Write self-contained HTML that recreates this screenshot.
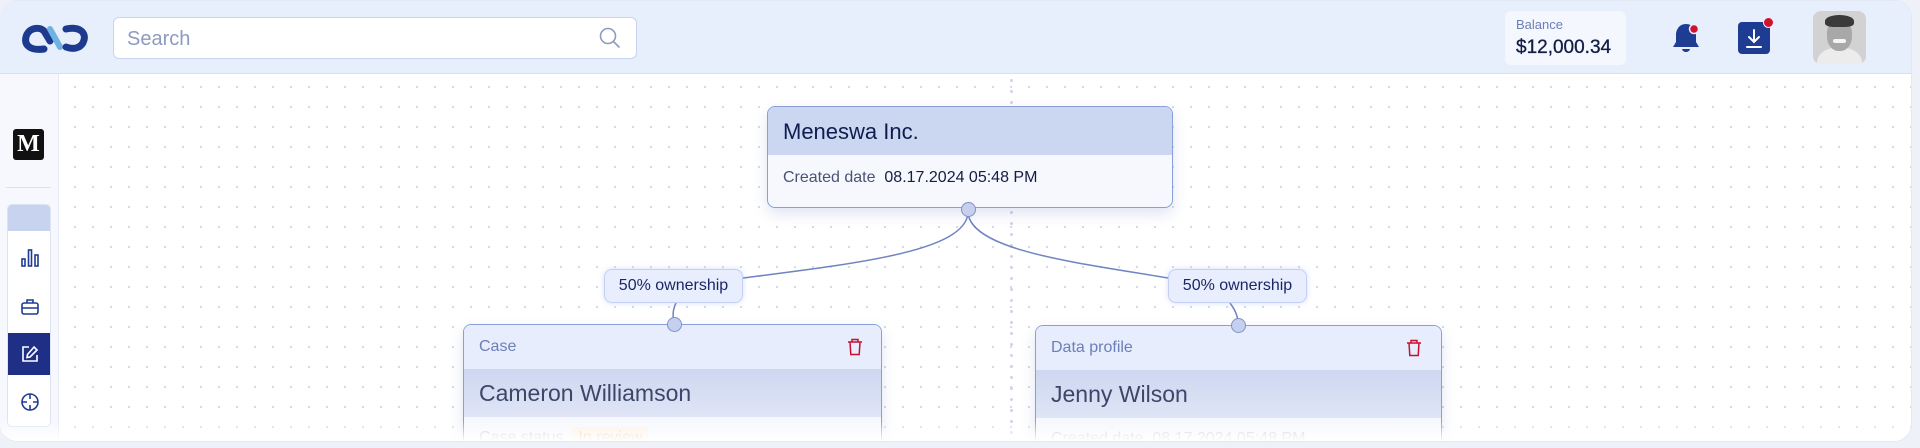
<!DOCTYPE html>
<html><head><meta charset="utf-8"><style>
*{box-sizing:border-box;margin:0;padding:0}
body{width:1920px;height:448px;background:#eef1f8;font-family:"Liberation Sans",sans-serif;overflow:hidden;position:relative}
.frame{position:absolute;left:0;top:0;width:1912px;height:442px;background:#fff;border-radius:18px;overflow:hidden;border:1px solid #e3e8f5;border-left:none}
.header{position:absolute;left:0;top:0;width:100%;height:73px;background:#e7eefc;border-bottom:1px solid #d8e0f3}
.search{position:absolute;left:113px;top:16px;width:524px;height:42px;background:#fff;border:1.5px solid #c9d4f0;border-radius:6px}
.search span{position:absolute;left:13px;top:10px;font-size:20px;color:#8e9bbf}
.bal{position:absolute;left:1505px;top:10px;width:121px;height:54px;background:#f4f7fe;border-radius:6px}
.bal .l{position:absolute;left:11px;top:6px;font-size:13px;color:#6b7fb8}
.bal .v{position:absolute;left:11px;top:26px;font-size:19px;color:#141c44;-webkit-text-stroke:0.3px #141c44}
.side{position:absolute;left:0;top:73px;width:59px;height:380px;background:#f6f8fd;border-right:1px solid #e6eaf4}
.canvas{position:absolute;left:60px;top:74px;right:0;bottom:0;background-image:radial-gradient(circle,#d3d9e8 1px,transparent 1.3px);background-size:18px 20px;background-position:6px 2px}
.node{position:absolute;background:#f6f8fd;border:1.5px solid #8b9fd6;border-radius:8px;box-shadow:0 6px 14px rgba(90,110,190,.18);overflow:hidden}
.lbl{position:absolute;height:34px;background:#e8eefd;border:1.5px solid #c3cff5;border-radius:8px;font-size:16px;color:#1b2664;line-height:31px;text-align:center;box-shadow:0 0 6px rgba(140,160,240,.35)}
.dot{position:absolute;width:15px;height:15px;border-radius:50%;background:#c6d0ee;border:1.5px solid #7e92c9}
</style></head><body>
<div class="frame">
<div class="canvas"></div>
<div style="position:absolute;left:1010px;top:74px;width:3px;height:370px;background-image:radial-gradient(circle,#d6d0ea 1.4px,transparent 1.6px);background-size:3px 11px"></div>
<div class="header">
 <svg style="position:absolute;left:22px;top:22px" width="66" height="30" viewBox="0 0 66 30">
  <path d="M22 26 C8 28 2 22 4 14 C6 5 17 3 22 8 L28 18" fill="none" stroke="#1d3a8f" stroke-width="7" stroke-linecap="round"/>
  <path d="M28 6 L38 24" stroke="#6fb2e4" stroke-width="6" stroke-linecap="round"/>
  <path d="M44 6 C58 3 64 10 62 17 C60 25 52 27 44 24" fill="none" stroke="#1d3a8f" stroke-width="7" stroke-linecap="round"/>
 </svg>
 <div class="search"><span>Search</span>
  <svg style="position:absolute;right:14px;top:8px" width="24" height="24" viewBox="0 0 24 24"><circle cx="10" cy="10" r="7.5" fill="none" stroke="#8e9bbf" stroke-width="1.6"/><path d="M15.5 15.5 L21 21" stroke="#8e9bbf" stroke-width="1.6" stroke-linecap="round"/></svg></div>
 <div class="bal"><div class="l">Balance</div><div class="v">$12,000.34</div></div>
 <svg style="position:absolute;left:1671px;top:20px" width="30" height="34" viewBox="0 0 30 34"><path d="M15 3 C8 3 5 9 5 14 L5 21 L2 26 L28 26 L25 21 L25 14 C25 9 22 3 15 3Z" fill="#1f3c93"/><path d="M11 28 C12 32 18 32 19 28Z" fill="#1f3c93"/><circle cx="23" cy="8" r="4.5" fill="#d0122d" stroke="#e7eefc" stroke-width="1.5"/></svg>
 <div style="position:absolute;left:1738px;top:21px;width:32px;height:32px;background:#1f3c93;border-radius:4px"></div>
 <svg style="position:absolute;left:1738px;top:21px" width="32" height="32" viewBox="0 0 32 32"><path d="M16 8 L16 20 M11 15 L16 20 L21 15 M9 25 L23 25" stroke="#fff" stroke-width="2" fill="none" stroke-linecap="round"/></svg>
 <div style="position:absolute;left:1763px;top:16px;width:11px;height:11px;border-radius:50%;background:#d0122d;border:1.5px solid #e7eefc"></div>
 <div style="position:absolute;left:1813px;top:10px;width:53px;height:53px;border-radius:8px;overflow:hidden;background:#d2d2d2">
  <div style="position:absolute;left:4px;top:36px;width:45px;height:30px;border-radius:50%;background:#ececec"></div>
  <div style="position:absolute;left:14px;top:8px;width:25px;height:32px;border-radius:45%;background:#a8a8a8"></div>
  <div style="position:absolute;left:12px;top:4px;width:29px;height:12px;border-radius:50% 50% 30% 30%;background:#3a3a3a"></div>
  <div style="position:absolute;left:20px;top:28px;width:13px;height:4px;border-radius:2px;background:#f4f4f4"></div>
 </div>
</div>
<div class="side">
 <div style="position:absolute;left:13px;top:55px;width:31px;height:31px;background:#111;border-radius:3px;color:#fff;font-family:'Liberation Serif',serif;font-weight:bold;font-size:24px;text-align:center;line-height:31px">M</div>
 <div style="position:absolute;left:6px;top:113px;width:45px;height:1px;background:#dde2ee"></div>
 <div style="position:absolute;left:7px;top:130px;width:44px;height:223px;background:#fff;border:1px solid #dde3f2;border-radius:5px;overflow:hidden">
  <div style="height:26px;background:#c8d3f0"></div>
  <svg style="position:absolute;left:12px;top:43px" width="20" height="20" viewBox="0 0 20 20" fill="none" stroke="#1f3c93" stroke-width="1.6"><rect x="2" y="11" width="3" height="7"/><rect x="8.5" y="2" width="3" height="16"/><rect x="15" y="7" width="3" height="11"/></svg>
  <svg style="position:absolute;left:12px;top:92px" width="20" height="20" viewBox="0 0 20 20" fill="none" stroke="#1f3c93" stroke-width="1.6"><rect x="2" y="6" width="16" height="11" rx="2"/><path d="M7 6 V3 H13 V6 M2 11 H18"/></svg>
  <div style="position:absolute;left:0;top:128px;width:44px;height:42px;background:#1f2f86"></div>
  <svg style="position:absolute;left:12px;top:139px" width="20" height="20" viewBox="0 0 20 20" fill="none" stroke="#fff" stroke-width="1.6"><path d="M9 3 H3 V17 H17 V11"/><path d="M14 3 L17 6 L10 13 L7 13.5 L7.5 10.5Z"/></svg>
  <svg style="position:absolute;left:12px;top:187px" width="20" height="20" viewBox="0 0 20 20" fill="none" stroke="#1f3c93" stroke-width="1.6"><circle cx="10" cy="10" r="8"/><path d="M10 2 V7 M10 13 V18 M2 10 H7 M13 10 H18"/></svg>
 </div>
</div>

<svg style="position:absolute;left:0;top:0" width="1920" height="448"><g fill="none" stroke="#6f84c0" stroke-width="1.5">
<path d="M968 212 C965 250 860 262 743 277"/><path d="M968 212 C972 250 1080 262 1168 277"/>
<path d="M676 302 C672 310 673 316 674 322"/><path d="M1230 302 C1236 310 1238 316 1238 322"/></g></svg>

<div class="node" style="left:767px;top:105px;width:406px;height:102px">
 <div style="height:48px;background:#cbd6f1;padding:12px 15px;font-size:22px;color:#111c4e">Meneswa Inc.</div>
 <div style="padding:14px 15px;font-size:16px;color:#4a5275">Created date&nbsp;&nbsp;<span style="color:#141c44">08.17.2024 05:48 PM</span></div>
</div>
<div class="dot" style="left:961px;top:201px"></div>

<div class="lbl" style="left:604px;top:268px;width:139px">50% ownership</div>
<div class="lbl" style="left:1168px;top:268px;width:139px">50% ownership</div>

<div class="node" style="left:463px;top:323px;width:419px;height:140px">
 <div style="height:44px;background:#e7edfc;padding:13px 15px;font-size:16px;color:#6b7fb8">Case</div>
 <div style="height:48px;background:linear-gradient(#cdd7f0,#dfe5f6);padding:11px 15px;font-size:23px;color:#3d4668">Cameron Williamson</div>
 <div style="padding:12px 15px;font-size:16px;color:#c8ccd8">Case status&nbsp;&nbsp;<span style="background:#fdf1e6;color:#f4c9a4;padding:2px 6px">In review</span></div>
 <svg style="position:absolute;right:18px;top:13px" width="16" height="18" viewBox="0 0 16 18" fill="none" stroke="#c8102e" stroke-width="1.5"><path d="M1 4 H15 M5 4 V1.5 H11 V4 M3 4 L3.8 16.5 H12.2 L13 4"/></svg>
</div>
<div class="dot" style="left:667px;top:316px"></div>

<div class="node" style="left:1035px;top:324px;width:407px;height:140px">
 <div style="height:44px;background:#e7edfc;padding:13px 15px;font-size:16px;color:#6b7fb8">Data profile</div>
 <div style="height:48px;background:linear-gradient(#cdd7f0,#dfe5f6);padding:11px 15px;font-size:23px;color:#3d4668">Jenny Wilson</div>
 <div style="padding:12px 15px;font-size:16px;color:#c8ccd8">Created date&nbsp;&nbsp;08.17.2024 05:48 PM</div>
 <svg style="position:absolute;right:19px;top:13px" width="16" height="18" viewBox="0 0 16 18" fill="none" stroke="#c8102e" stroke-width="1.5"><path d="M1 4 H15 M5 4 V1.5 H11 V4 M3 4 L3.8 16.5 H12.2 L13 4"/></svg>
</div>
<div class="dot" style="left:1231px;top:317px"></div>

<div style="position:absolute;left:0;top:420px;width:100%;height:30px;background:linear-gradient(rgba(255,255,255,0),#fff 70%)"></div>
</div>
</body></html>
